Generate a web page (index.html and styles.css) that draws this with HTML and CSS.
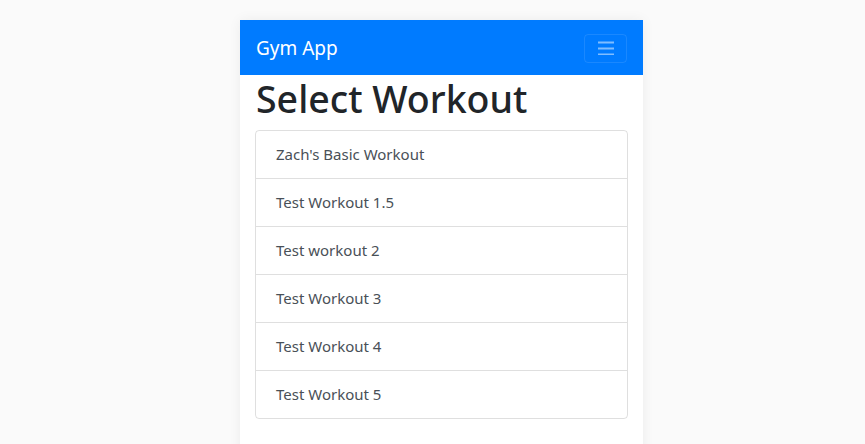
FILE: index.html
```html
<!DOCTYPE html>
<html>
<head>
<meta charset="utf-8">
<link rel="stylesheet" href="styles.css">
</head>
<body>
<div class="app">
  <nav class="navbar">
    <span class="brand">Gym App</span>
    <button class="toggler" aria-label="Menu">
      <svg width="16" height="14" viewBox="0 0 16 14"><path d="M0 1.5h16M0 7.5h16M0 13.5h16" stroke="rgba(255,255,255,0.5)" stroke-width="2"/></svg>
    </button>
  </nav>
  <main class="content">
    <h1 class="title">Select Workout</h1>
    <div class="list">
      <div class="item">Zach's Basic Workout</div>
      <div class="item">Test Workout 1.5</div>
      <div class="item">Test workout 2</div>
      <div class="item">Test Workout 3</div>
      <div class="item">Test Workout 4</div>
      <div class="item">Test Workout 5</div>
    </div>
  </main>
</div>
</body>
</html>
```
FILE: styles.css
```css
html, body {
  margin: 0;
  padding: 0;
  background: #fafafa;
  font-family: "Noto Sans", "Open Sans", sans-serif;
}
.app {
  width: 403px;
  margin: 20px 0 0 240px;
  background: #fff;
  min-height: 440px;
  box-shadow: 0 0 12px rgba(0,0,0,0.06);
}
.navbar {
  height: 55px;
  box-sizing: border-box;
  padding: 0 16px;
  background: #007bff;
  display: flex;
  align-items: center;
  justify-content: space-between;
}
.brand {
  color: #fff;
  font-size: 19px;
}
.toggler {
  width: 43px;
  height: 29px;
  box-sizing: border-box;
  border: 1px solid rgba(255,255,255,0.1);
  border-radius: 4px;
  background: transparent;
  display: flex;
  align-items: center;
  justify-content: center;
  padding: 0;
  margin-top: 1px;
}
.content {
  padding: 0 15px;
}
.title {
  margin: 0 0 7px;
  font-size: 37.5px;
  font-weight: 500;
  line-height: 48px;
  color: #212529;
  padding-left: 1px;
}
.list {
  border: 1px solid rgba(0,0,0,0.125);
  border-radius: 4px;
}
.item {
  height: 47px;
  box-sizing: border-box;
  padding: 0 20px 2px;
  display: flex;
  align-items: center;
  font-size: 15px;
  color: #495057;
  border-top: 1px solid rgba(0,0,0,0.125);
}
.item + .item {
  height: 48px;
}
.item:first-child {
  border-top: none;
}
```
